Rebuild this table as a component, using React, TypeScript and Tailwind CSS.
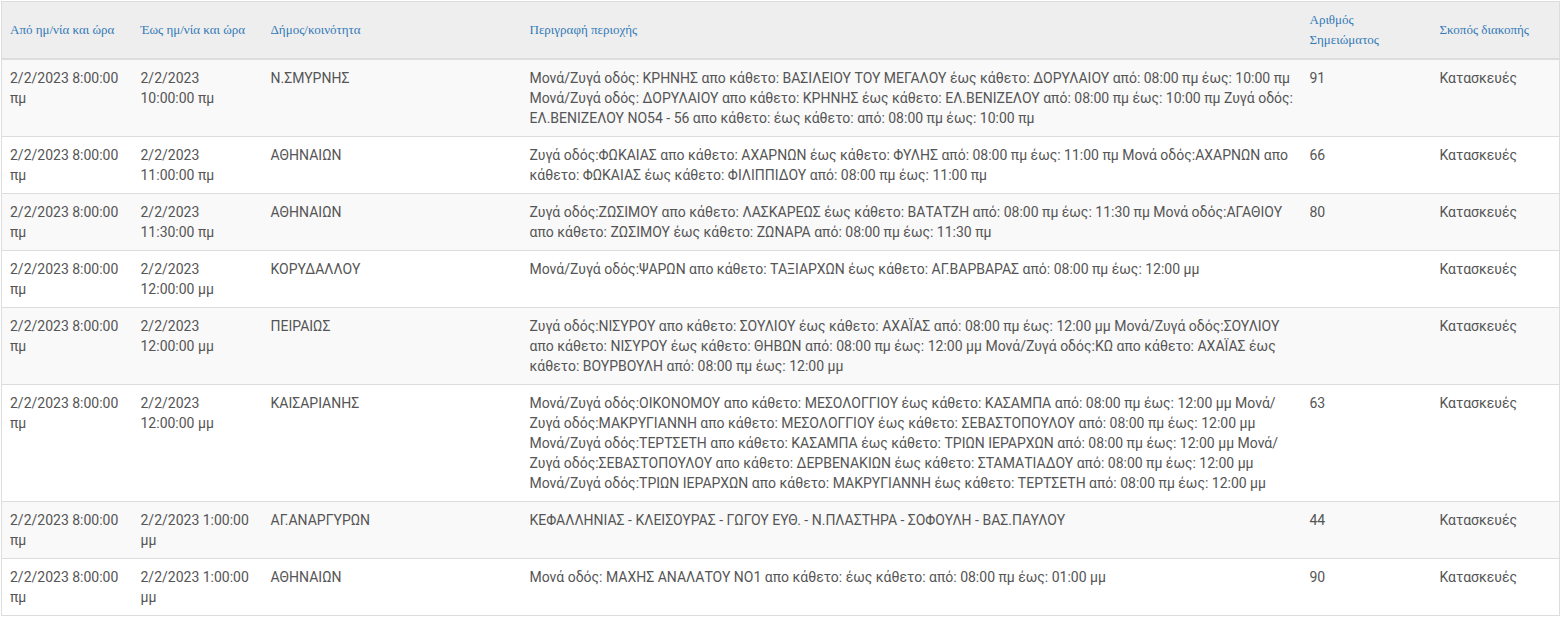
import React from 'react';

interface Outage {
  from: string;
  to: string;
  municipality: string;
  description: string;
  note: string;
  reason: string;
}

const rows: Outage[] = [
  {
    from: '2/2/2023 8:00:00 πμ',
    to: '2/2/2023 10:00:00 πμ',
    municipality: 'Ν.ΣΜΥΡΝΗΣ',
    description:
      'Μονά/Ζυγά οδός: ΚΡΗΝΗΣ απο κάθετο: ΒΑΣΙΛΕΙΟΥ ΤΟΥ ΜΕΓΑΛΟΥ έως κάθετο: ΔΟΡΥΛΑΙΟΥ από: 08:00 πμ έως: 10:00 πμ Μονά/Ζυγά οδός: ΔΟΡΥΛΑΙΟΥ απο κάθετο: ΚΡΗΝΗΣ έως κάθετο: ΕΛ.ΒΕΝΙΖΕΛΟΥ από: 08:00 πμ έως: 10:00 πμ Ζυγά οδός: ΕΛ.ΒΕΝΙΖΕΛΟΥ ΝΟ54 - 56 απο κάθετο: έως κάθετο: από: 08:00 πμ έως: 10:00 πμ',
    note: '91',
    reason: 'Κατασκευές',
  },
  {
    from: '2/2/2023 8:00:00 πμ',
    to: '2/2/2023 11:00:00 πμ',
    municipality: 'ΑΘΗΝΑΙΩΝ',
    description:
      'Ζυγά οδός:ΦΩΚΑΙΑΣ απο κάθετο: ΑΧΑΡΝΩΝ έως κάθετο: ΦΥΛΗΣ από: 08:00 πμ έως: 11:00 πμ Μονά οδός:ΑΧΑΡΝΩΝ απο κάθετο: ΦΩΚΑΙΑΣ έως κάθετο: ΦΙΛΙΠΠΙΔΟΥ από: 08:00 πμ έως: 11:00 πμ',
    note: '66',
    reason: 'Κατασκευές',
  },
  {
    from: '2/2/2023 8:00:00 πμ',
    to: '2/2/2023 11:30:00 πμ',
    municipality: 'ΑΘΗΝΑΙΩΝ',
    description:
      'Ζυγά οδός:ΖΩΣΙΜΟΥ απο κάθετο: ΛΑΣΚΑΡΕΩΣ έως κάθετο: ΒΑΤΑΤΖΗ από: 08:00 πμ έως: 11:30 πμ Μονά οδός:ΑΓΑΘΙΟΥ απο κάθετο: ΖΩΣΙΜΟΥ έως κάθετο: ΖΩΝΑΡΑ από: 08:00 πμ έως: 11:30 πμ',
    note: '80',
    reason: 'Κατασκευές',
  },
  {
    from: '2/2/2023 8:00:00 πμ',
    to: '2/2/2023 12:00:00 μμ',
    municipality: 'ΚΟΡΥΔΑΛΛΟΥ',
    description: 'Μονά/Ζυγά οδός:ΨΑΡΩΝ απο κάθετο: ΤΑΞΙΑΡΧΩΝ έως κάθετο: ΑΓ.ΒΑΡΒΑΡΑΣ από: 08:00 πμ έως: 12:00 μμ',
    note: '',
    reason: 'Κατασκευές',
  },
  {
    from: '2/2/2023 8:00:00 πμ',
    to: '2/2/2023 12:00:00 μμ',
    municipality: 'ΠΕΙΡΑΙΩΣ',
    description:
      'Ζυγά οδός:ΝΙΣΥΡΟΥ απο κάθετο: ΣΟΥΛΙΟΥ έως κάθετο: ΑΧΑΪΑΣ από: 08:00 πμ έως: 12:00 μμ Μονά/Ζυγά οδός:ΣΟΥΛΙΟΥ απο κάθετο: ΝΙΣΥΡΟΥ έως κάθετο: ΘΗΒΩΝ από: 08:00 πμ έως: 12:00 μμ Μονά/Ζυγά οδός:ΚΩ απο κάθετο: ΑΧΑΪΑΣ έως κάθετο: ΒΟΥΡΒΟΥΛΗ από: 08:00 πμ έως: 12:00 μμ',
    note: '',
    reason: 'Κατασκευές',
  },
  {
    from: '2/2/2023 8:00:00 πμ',
    to: '2/2/2023 12:00:00 μμ',
    municipality: 'ΚΑΙΣΑΡΙΑΝΗΣ',
    description:
      'Μονά/Ζυγά οδός:ΟΙΚΟΝΟΜΟΥ απο κάθετο: ΜΕΣΟΛΟΓΓΙΟΥ έως κάθετο: ΚΑΣΑΜΠΑ από: 08:00 πμ έως: 12:00 μμ Μονά/Ζυγά οδός:ΜΑΚΡΥΓΙΑΝΝΗ απο κάθετο: ΜΕΣΟΛΟΓΓΙΟΥ έως κάθετο: ΣΕΒΑΣΤΟΠΟΥΛΟΥ από: 08:00 πμ έως: 12:00 μμ Μονά/Ζυγά οδός:ΤΕΡΤΣΕΤΗ απο κάθετο: ΚΑΣΑΜΠΑ έως κάθετο: ΤΡΙΩΝ ΙΕΡΑΡΧΩΝ από: 08:00 πμ έως: 12:00 μμ Μονά/Ζυγά οδός:ΣΕΒΑΣΤΟΠΟΥΛΟΥ απο κάθετο: ΔΕΡΒΕΝΑΚΙΩΝ έως κάθετο: ΣΤΑΜΑΤΙΑΔΟΥ από: 08:00 πμ έως: 12:00 μμ Μονά/Ζυγά οδός:ΤΡΙΩΝ ΙΕΡΑΡΧΩΝ απο κάθετο: ΜΑΚΡΥΓΙΑΝΝΗ έως κάθετο: ΤΕΡΤΣΕΤΗ από: 08:00 πμ έως: 12:00 μμ',
    note: '63',
    reason: 'Κατασκευές',
  },
  {
    from: '2/2/2023 8:00:00 πμ',
    to: '2/2/2023 1:00:00 μμ',
    municipality: 'ΑΓ.ΑΝΑΡΓΥΡΩΝ',
    description: 'ΚΕΦΑΛΛΗΝΙΑΣ - ΚΛΕΙΣΟΥΡΑΣ - ΓΩΓΟΥ ΕΥΘ. - Ν.ΠΛΑΣΤΗΡΑ - ΣΟΦΟΥΛΗ - ΒΑΣ.ΠΑΥΛΟΥ',
    note: '44',
    reason: 'Κατασκευές',
  },
  {
    from: '2/2/2023 8:00:00 πμ',
    to: '2/2/2023 1:00:00 μμ',
    municipality: 'ΑΘΗΝΑΙΩΝ',
    description: 'Μονά οδός: ΜΑΧΗΣ ΑΝΑΛΑΤΟΥ ΝΟ1 απο κάθετο: έως κάθετο: από: 08:00 πμ έως: 01:00 μμ',
    note: '90',
    reason: 'Κατασκευές',
  },
];

const thClass = "px-2 py-2 text-left align-middle font-normal text-[13px] leading-5 text-[#337ab7] border-b-2 border-[#ddd]";
const tdClass = "px-2 py-2 align-top text-sm leading-5 border-t border-[#ddd]";

const App = () => {
  return (
    <div className="bg-white pt-px pl-px w-[1561px] h-[620px]">
      <table className="table-fixed w-[1559px] border border-[#ddd] border-collapse font-['Roboto',sans-serif] text-[#555]">
        <colgroup>
          <col className="w-[131px]" />
          <col className="w-[130px]" />
          <col className="w-[259px]" />
          <col className="w-[780px]" />
          <col className="w-[130px]" />
          <col />
        </colgroup>
        <thead className="bg-[#eeeeee] font-['Liberation_Serif',serif]">
          <tr>
            <th className={thClass}>Από ημ/νία και ώρα</th>
            <th className={thClass}>Έως ημ/νία και ώρα</th>
            <th className={thClass}>Δήμος/κοινότητα</th>
            <th className={thClass}>Περιγραφή περιοχής</th>
            <th className={thClass}>Αριθμός Σημειώματος</th>
            <th className={thClass}>Σκοπός διακοπής</th>
          </tr>
        </thead>
        <tbody>
          {rows.map((row, index) => (
            <tr key={index} className={index % 2 === 0 ? 'bg-[#f9f9f9]' : 'bg-white'}>
              <td className={tdClass}>{row.from}</td>
              <td className={tdClass}>{row.to}</td>
              <td className={tdClass}>{row.municipality}</td>
              <td className={tdClass}>{row.description}</td>
              <td className={tdClass}>{row.note}</td>
              <td className={tdClass}>{row.reason}</td>
            </tr>
          ))}
        </tbody>
      </table>
    </div>
  );
};

export default App;
